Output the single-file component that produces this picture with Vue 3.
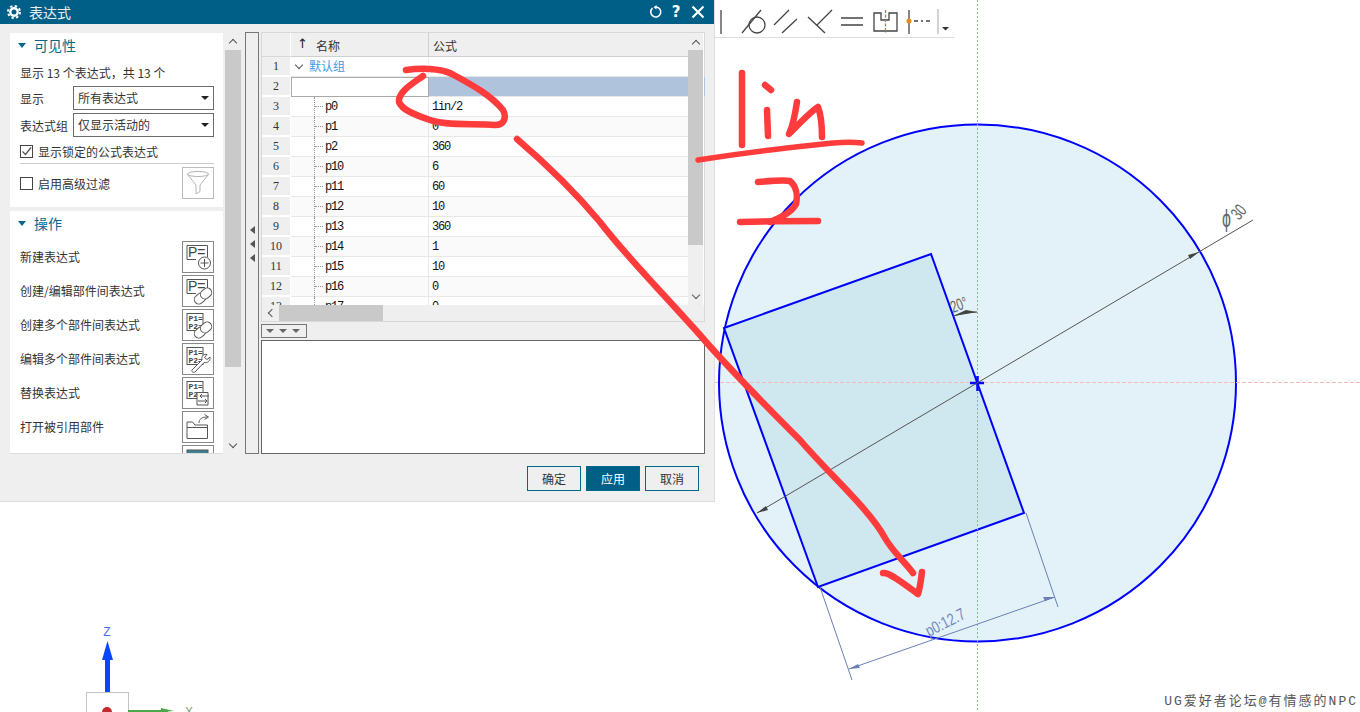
<template>
  <div class="stage">
    <!-- cad viewport -->
    <svg class="canvas" width="1360" height="712" viewBox="0 0 1360 712">
      <circle cx="977.5" cy="383" r="258.5" fill="#e2f2f8" stroke="#0000ff" stroke-width="2" />
      <polygon points="724,328 931,254 1024,513 818,587" fill="#cfe7ef" stroke="#0000ff" stroke-width="2" />
      <line x1="977.5" y1="0" x2="977.5" y2="712" stroke="#8fb58f" stroke-dasharray="2 2" />
      <line x1="690" y1="382.5" x2="1360" y2="382.5" stroke="#f6b8b8" stroke-dasharray="4 2" />
      <path d="M970 383h14M977.5 376v15" stroke="#0000ff" stroke-width="2.500" fill="none" />

      <!-- dia 30 -->
      <line x1="757" y1="513" x2="1253" y2="220" stroke="#555" />
      <polygon points="1199,252 1188,255 1190,259" fill="#444" />
      <polygon points="757,513 768,510 766,506" fill="#444" />
      <text class="dim" transform="translate(1222,227) scale(1,1.500)" font-size="16">ϕ</text>
      <text class="dim" transform="translate(1239,221) rotate(-50) scale(0.800,1.200)" font-size="15">30</text>

      <!-- 20 deg -->
      <path d="M953 316Q965 312 977 312" stroke="#444" fill="none" />
      <polygon points="953,316 966,310 977,312 966,314" fill="#444" />
      <text class="dim" transform="translate(953,313) rotate(-20) scale(0.800,1.200)" font-size="14">20°</text>

      <!-- p0 dim -->
      <path d="M820 587L852 680M1026 513L1058 607M849 669L1055 597" stroke="#6c7fb5" fill="none" />
      <polygon points="849,669 860,668 858,664" fill="#6c7fb5" />
      <polygon points="1055,597 1043,597 1045,601" fill="#6c7fb5" />
      <text class="dim blue" transform="translate(929,637) rotate(-27) scale(0.900,1.200)" font-size="14">p0:12.7</text>

      <!-- triad -->
      <text x="107" y="636" text-anchor="middle" font-size="12" fill="#4a6cf0" font-family="Liberation Sans, sans-serif">Z</text>
      <rect x="105" y="658" width="5" height="35" fill="#0a46ff" />
      <polygon points="107.5,641 102,660 113,660" fill="#0a46ff" />
      <rect x="86.5" y="692.5" width="42" height="24" fill="#fff" stroke="#c4c4c4" />
      <circle cx="107" cy="712" r="5" fill="#c22c2c" />
      <rect x="128" y="710" width="40" height="2" fill="#4aa84a" />
      <polygon points="161,708 174,711 161,712" fill="#4aa84a" />
      <text x="189" y="716" text-anchor="middle" font-size="12" fill="#7aa67a" font-family="Liberation Sans, sans-serif">X</text>
    </svg>

    <!-- sketch constraint toolbar -->
    <div class="toolbar">
      <svg width="238" height="38" viewBox="717 0 238 38" fill="none" stroke="#444" stroke-width="1.300">
        <path d="M721 10v24" />
        <path d="M742 33L761 10" /><circle cx="757" cy="25" r="8" />
        <path d="M774 25L789 10M782 33L797 19" />
        <path d="M808 17L825 33M832 10L817 25" />
        <path d="M841 18h22M841 25h22" />
        <path d="M874 13v18h23V13h-8v7h-8v-7z" />
        <path d="M885.500 10v23" stroke="#d0761f" stroke-dasharray="3 1.500" />
        <path d="M909 10v24" />
        <path d="M914 21h4M921 21h2M926 21h4" />
        <circle cx="909" cy="21" r="2.500" fill="#e58a1c" stroke="none" />
        <path d="M938 9v25" stroke="#bbb" />
        <path d="M942 27h7l-3.500 3.500z" fill="#333" stroke="none" />
      </svg>
    </div>

    <div class="dialog">
      <div class="titlebar">
        <svg class="gear" width="16" height="16" viewBox="0 0 16 16" fill="none" stroke="#fff">
          <circle cx="8" cy="8" r="3.700" stroke-width="2.400" />
          <circle cx="8" cy="8" r="6" stroke-width="2" stroke-dasharray="2.400 2.310" />
        </svg>
        <span class="title">表达式</span>
        <svg class="title-btn" width="14" height="14" viewBox="0 0 14 14" fill="none" stroke="#fff" stroke-width="1.600">
          <path d="M3.500 3.200A5 5 0 1 0 7 2" />
          <path d="M7.500 0L4.500 2.300L7.500 4.600z" fill="#fff" stroke="none" />
        </svg>
        <span class="help">?</span>
        <svg class="close" width="14" height="14" viewBox="0 0 14 14" stroke="#fff" stroke-width="2.200">
          <path d="M1.500 1.500L12.500 12.500M12.500 1.500L1.500 12.500" />
        </svg>
      </div>

      <div class="body">
        <div class="left">
          <div class="panels">
            <section class="panel visible-panel">
              <div class="panel-head"><i class="tri"></i>可见性</div>
              <div class="summary">显示 13 个表达式，共 13 个</div>
              <div class="field">
                <span class="field-label">显示</span>
                <div class="select">所有表达式<i class="select-arrow"></i></div>
              </div>
              <div class="field">
                <span class="field-label">表达式组</span>
                <div class="select">仅显示活动的<i class="select-arrow"></i></div>
              </div>
              <label class="check">
                <span class="box">
                  <svg width="11" height="11" viewBox="0 0 11 11" fill="none" stroke="#555" stroke-width="1.300"><path d="M1.500 5.500L4.500 8.500L10 1.500" /></svg>
                </span>
                显示锁定的公式表达式
              </label>
              <div class="sep"></div>
              <div class="filter-row">
                <label class="check"><span class="box"></span>启用高级过滤</label>
                <div class="filter-btn">
                  <svg width="30" height="30" viewBox="0 0 30 30" fill="none" stroke="#b5b5b5">
                    <ellipse cx="15" cy="6" rx="10.500" ry="2.500" />
                    <path d="M4.500 6.500L13 17V26L17 23.500V17L25.500 6.500" />
                  </svg>
                </div>
              </div>
            </section>

            <section class="panel ops-panel">
              <div class="panel-head"><i class="tri"></i>操作</div>
              <div class="op-list">
                <div v-for="op in ops" :key="op.label" class="op">
                  <span>{{ op.label }}</span>
                  <div class="op-btn">
                    <svg width="30" height="30" viewBox="0 0 30 30" fill="none" stroke="#555" stroke-width="1">
                      <template v-if="op.kind === 'plus' || op.kind === 'link'">
                        <path d="M4 3.500H24.500V15" /><path d="M4 3.500V17.500H13" />
                        <text x="5" y="15" class="ico-big">P=</text>
                      </template>
                      <template v-if="op.kind === 'plus'">
                        <circle cx="21.500" cy="21" r="6" fill="#fff" />
                        <path d="M21.500 17v8M17.500 21h8" />
                      </template>
                      <template v-if="op.kind === 'multi' || op.kind === 'wrench' || op.kind === 'swap'">
                        <rect x="4" y="3.500" width="16" height="17" />
                        <text x="5.500" y="10.500" class="ico-small">P1=</text>
                        <text x="5.500" y="18.500" class="ico-small">P2=</text>
                      </template>
                      <g v-if="op.kind === 'link' || op.kind === 'multi'" transform="rotate(-40 20 20)" fill="#fff">
                        <rect x="10" y="15.500" width="12" height="9" rx="4.500" />
                        <rect x="18" y="15.500" width="12" height="9" rx="4.500" />
                      </g>
                      <path v-if="op.kind === 'wrench'" fill="#fff" d="M9 26L19 16C18 12 21 9.500 24 10.500L21.500 13.500L24 15.500L27 13C27.500 17 24 19.500 21 18.500L12 28C10.500 29 8 27.500 9 26Z" />
                      <template v-if="op.kind === 'swap'">
                        <path d="M14 14.500H25V27H14Z" fill="#fff" />
                        <path d="M26 18H17M19 16L17 18L19 20M15 23H24M22 21L24 23L22 25" />
                      </template>
                      <template v-if="op.kind === 'folder'">
                        <path d="M4 13V26.500H24.500V13H12L9.500 10H4Z" />
                        <path d="M4 15.500H24.500" />
                        <path d="M16 11C16 7 19 5 24 5M21.500 2.500L25.500 5L21.500 7.500" />
                      </template>
                      <template v-if="op.kind === 'view'">
                        <rect x="4" y="4" width="21" height="10" fill="#3f7f92" stroke="#555" />
                      </template>
                    </svg>
                  </div>
                </div>
              </div>
            </section>
          </div>

          <div class="scrollbar">
            <span class="chev up"></span>
            <div class="left-thumb"></div>
            <span class="chev down"></span>
          </div>
        </div>

        <div class="splitter">
          <i v-for="n in 3" :key="n" class="split-arrow"></i>
        </div>

        <div class="right">
          <div class="table">
            <div class="table-top">
              <div class="table-main">
                <div class="row head">
                  <div class="num"></div>
                  <div class="name"><span class="sort">↑</span>名称</div>
                  <div class="formula">公式</div>
                </div>
                <div class="row group">
                  <div class="num">1</div>
                  <div class="name"><i class="expander"></i><span class="group-name">默认组</span></div>
                  <div class="formula"></div>
                </div>
                <div class="row editing">
                  <div class="num">2</div>
                  <div class="name"></div>
                  <div class="formula"></div>
                </div>
                <div v-for="(r, i) in rows" :key="r.name" class="row" :class="{ alt: i % 2 === 1 }">
                  <div class="num">{{ i + 3 }}</div>
                  <div class="name leaf">{{ r.name }}</div>
                  <div class="formula mono">{{ r.value }}</div>
                </div>
              </div>
              <div class="scrollbar table-v">
                <span class="chev up"></span>
                <div class="table-thumb"></div>
                <span class="chev down"></span>
                <i class="row-tick"></i>
              </div>
            </div>
            <div class="hscroll">
              <i class="chev-left"></i>
              <div class="h-thumb"></div>
            </div>
          </div>

          <div class="more-btn"><i v-for="n in 3" :key="n"></i></div>
          <div class="message"></div>
        </div>
      </div>

      <div class="footer">
        <button class="btn">确定</button>
        <button class="btn primary">应用</button>
        <button class="btn">取消</button>
      </div>
    </div>

    <!-- red pen notes drawn over everything -->
    <svg class="ink" width="1360" height="712" viewBox="0 0 1360 712" fill="none" stroke="#ff3b3b" stroke-width="6.500" stroke-linecap="round" stroke-linejoin="round">
      <path d="M406 70C420 68 440 68 452 74C470 84 490 94 503 110C507 118 504 125 495 125C475 123 445 126 430 120C415 115 402 110 399 102C398 92 412 84 423 76" />
      <path d="M517 139C545 163 575 192 600 222C625 255 660 290 700 335C730 370 770 410 800 440C830 475 870 510 885 538C893 552 905 562 913 573" />
      <path d="M883 573C890 572 905 585 918 594C920 588 921 580 922 572" />
      <path d="M742 73V145" />
      <path d="M765 85L771 90" />
      <path d="M767 110L768 136" />
      <path d="M797 102C795 115 792 128 789 134C797 126 810 112 818 107C821 115 822 125 822 137" />
      <path d="M698 160C730 155 773 149 833 143C845 142 855 142 862 143" stroke-width="5.500" />
      <path d="M758 182C770 181 785 180 790 181C796 186 798 195 796 204C792 212 780 218 770 222" />
      <path d="M740 222C770 221 800 221 818 221" />
    </svg>

    <div class="watermark">UG爱好者论坛@有情感的NPC</div>
  </div>
</template>

<script setup>
const ops = [
  { label: '新建表达式', kind: 'plus' },
  { label: '创建/编辑部件间表达式', kind: 'link' },
  { label: '创建多个部件间表达式', kind: 'multi' },
  { label: '编辑多个部件间表达式', kind: 'wrench' },
  { label: '替换表达式', kind: 'swap' },
  { label: '打开被引用部件', kind: 'folder' },
  { label: '', kind: 'view' }
]

const rows = [
  { name: 'p0', value: '1in/2' },
  { name: 'p1', value: '0' },
  { name: 'p2', value: '360' },
  { name: 'p10', value: '6' },
  { name: 'p11', value: '60' },
  { name: 'p12', value: '10' },
  { name: 'p13', value: '360' },
  { name: 'p14', value: '1' },
  { name: 'p15', value: '10' },
  { name: 'p16', value: '0' },
  { name: 'p17', value: '0' }
]
</script>

<style>
html, body {
  margin: 0;
  overflow: hidden;
  background: #fff;
}
</style>

<style scoped>
.stage {
  position: relative;
  width: 1360px;
  height: 712px;
  overflow: hidden;
  background: #fff;
  font-family: "Noto Sans CJK SC", "Liberation Sans", sans-serif;
  font-size: 12px;
  color: #333;
}

.canvas, .ink {
  position: absolute;
  left: 0;
  top: 0;
}

.ink {
  pointer-events: none;
}

.dim {
  font-family: "Liberation Sans", sans-serif;
  fill: #666;
}

.dim.blue {
  fill: #7488b8;
}

.toolbar {
  position: absolute;
  left: 715px;
  top: 0;
  width: 240px;
  height: 38px;
  padding-left: 2px;
  box-sizing: border-box;
  background: #fff;
  border-bottom: 1px solid #ddd;
}

.toolbar svg {
  display: block;
}

.dialog {
  position: absolute;
  left: 0;
  top: 0;
  width: 715px;
  height: 502px;
  box-sizing: border-box;
  background: #efefef;
  border-right: 1px solid #ddd;
  border-bottom: 1px solid #ddd;
}

.titlebar {
  display: flex;
  align-items: center;
  height: 24px;
  padding-left: 6px;
  background: #005f87;
  color: #fff;
}

.gear {
  margin-right: 7px;
}

.title {
  flex: 1;
  font-size: 14px;
  color: #e6eef2;
}

.title-btn {
  margin-right: 7px;
}

.help {
  width: 12px;
  margin-right: 9px;
  font: bold 15px "DejaVu Sans", sans-serif;
  text-align: center;
}

.close {
  margin-right: 9px;
}

.body {
  display: flex;
  height: 430px;
  box-sizing: border-box;
  padding: 8px 0 0 10px;
}

.left {
  display: flex;
  width: 231px;
  height: 422px;
}

.panels {
  width: 213px;
  padding-top: 1px;
  box-sizing: border-box;
  overflow: hidden;
  border-bottom: 1px solid #ddd;
}

.panel {
  background: #fff;
  box-sizing: border-box;
  padding: 0 9px 0 10px;
}

.visible-panel {
  height: 174px;
  margin-bottom: 4px;
}

.ops-panel {
  height: 300px;
}

.panel-head {
  display: flex;
  align-items: center;
  height: 24px;
  font-size: 14px;
  color: #00688b;
}

.tri {
  width: 0;
  height: 0;
  margin: 0 8px 0 -2px;
  border-left: 4.500px solid transparent;
  border-right: 4.500px solid transparent;
  border-top: 5px solid #00688b;
}

.summary {
  height: 18px;
  margin-top: 7px;
  line-height: 17px;
}

.field {
  display: flex;
  align-items: center;
  height: 24px;
  margin-top: 4px;
}

.field + .field {
  margin-top: 3px;
}

.field-label {
  width: 53px;
}

.select {
  position: relative;
  width: 141px;
  height: 24px;
  box-sizing: border-box;
  padding-left: 4px;
  line-height: 22px;
  background: #fff;
  border: 1px solid #6b6b6b;
}

.select-arrow {
  position: absolute;
  right: 4px;
  top: 9px;
  border-left: 4px solid transparent;
  border-right: 4px solid transparent;
  border-top: 4px solid #222;
}

.check {
  display: flex;
  align-items: center;
  gap: 5px;
  height: 20px;
  margin-top: 4px;
}

.box {
  display: flex;
  align-items: center;
  justify-content: center;
  width: 13px;
  height: 13px;
  box-sizing: border-box;
  border: 1px solid #444;
}

.sep {
  height: 1px;
  margin-top: 2px;
  background: #ccc;
}

.filter-row {
  display: flex;
  align-items: center;
  justify-content: space-between;
  margin-top: 3px;
}

.filter-row .check {
  margin-top: 0;
}

.filter-btn {
  width: 32px;
  height: 32px;
  box-sizing: border-box;
  border: 1px solid #bbb;
}

.op-list {
  padding-top: 6px;
}

.op {
  display: flex;
  align-items: center;
  justify-content: space-between;
  height: 32px;
  margin-bottom: 2px;
}

.op span {
  margin-top: -1px;
}

.op-btn {
  width: 32px;
  height: 32px;
  box-sizing: border-box;
  border: 1px solid #888;
}

.op-btn svg {
  display: block;
}

.ico-big {
  font: 14px "Liberation Sans", sans-serif;
  fill: #444;
  stroke: none;
}

.ico-small {
  font: bold 8px "Liberation Mono", monospace;
  fill: #444;
  stroke: none;
}

.scrollbar {
  position: relative;
  display: flex;
  flex-direction: column;
  flex-shrink: 0;
  width: 16px;
  margin-left: 2px;
  background: #efefef;
}

.left-thumb {
  height: 317px;
  margin-top: 18px;
  background: #c9c9c9;
}

.table-thumb {
  height: 195px;
  margin-top: 17px;
  background: #c9c9c9;
}

.row-tick {
  position: absolute;
  right: -2px;
  top: 44px;
  width: 1px;
  height: 19px;
  background: #afc3dc;
}

.chev {
  position: absolute;
  left: 5px;
  width: 5px;
  height: 5px;
  border-left: 1.500px solid #555;
  border-top: 1.500px solid #555;
  transform: rotate(45deg);
}

.chev.up {
  top: 8px;
}

.chev.down {
  bottom: 7px;
  transform: rotate(225deg);
}

.splitter {
  display: flex;
  flex-direction: column;
  align-items: center;
  gap: 6px;
  width: 14px;
  height: 422px;
  margin: 0 2px 0 4px;
  padding-top: 193px;
  box-sizing: border-box;
  border: 1px solid #777;
  background: #efefef;
}

.split-arrow {
  width: 0;
  height: 0;
  border-top: 4px solid transparent;
  border-bottom: 4px solid transparent;
  border-right: 5px solid #555;
}

.right {
  display: flex;
  flex-direction: column;
  width: 444px;
}

.table {
  height: 290px;
  box-sizing: border-box;
  border: 1px solid #d8d8d8;
  background: #fff;
}

.table-top {
  display: flex;
  height: 272px;
}

.table-main {
  width: 426px;
  overflow: hidden;
}

.table-v {
  width: 15px;
  margin-left: 0;
}

.row {
  display: flex;
  height: 20px;
  line-height: 19px;
}

.row.alt .name,
.row.alt .formula {
  background: #fafafa;
}

.num {
  width: 29px;
  flex-shrink: 0;
  box-sizing: border-box;
  text-align: center;
  font: 12px/18px "Liberation Serif", serif;
  background: #efefef;
  border-right: 1px solid #fff;
  border-bottom: 2px solid #fff;
}

.name {
  position: relative;
  width: 138px;
  flex-shrink: 0;
  box-sizing: border-box;
  border-right: 1px solid #e8e8e8;
  border-bottom: 1px solid #e8e8e8;
}

.formula {
  flex: 1;
  box-sizing: border-box;
  padding-left: 3px;
  border-bottom: 1px solid #e8e8e8;
}

.head {
  height: 24px;
  line-height: 26px;
  background: #efefef;
}

.head .num {
  border-bottom: 1px solid #d8d8d8;
}

.head .name, .head .formula {
  border-bottom: 1px solid #d0d0d0;
}

.head .formula {
  padding-left: 4px;
}

.head .name {
  padding-left: 25px;
  border-right: 1px solid #d0d0d0;
}

.sort {
  position: absolute;
  left: 6px;
  top: 3px;
  font: 13px "DejaVu Sans", sans-serif;
  color: #222;
}

.group .name {
  display: flex;
  align-items: center;
  padding-left: 3px;
  border-right-color: #efefef;
}

.expander {
  width: 5px;
  height: 5px;
  margin: -3px 7px 0 2px;
  border-right: 1.500px solid #555;
  border-bottom: 1.500px solid #555;
  transform: rotate(45deg);
}

.group-name {
  margin-top: -2px;
  color: #3f9ae8;
}

.editing .name {
  background: #fff;
  border: 1px solid #aaa;
}

.editing .formula {
  background: #afc3dc;
}

.leaf,
.mono {
  font: 12px/21px "Liberation Mono", monospace;
  letter-spacing: -1.200px;
  color: #111;
}

.leaf {
  padding-left: 34px;
}

.leaf::before {
  content: "";
  position: absolute;
  left: 23px;
  top: 0;
  bottom: -1px;
  border-left: 1px dotted #999;
}

.leaf::after {
  content: "";
  position: absolute;
  left: 24px;
  top: 9px;
  width: 8px;
  border-top: 1px dotted #999;
}

.hscroll {
  position: relative;
  display: flex;
  height: 16px;
  background: #efefef;
}

.chev-left {
  position: absolute;
  left: 7px;
  top: 5px;
  width: 5px;
  height: 5px;
  border-left: 1.500px solid #555;
  border-bottom: 1.500px solid #555;
  transform: rotate(45deg);
}

.h-thumb {
  width: 104px;
  margin-left: 17px;
  background: #c9c9c9;
}

.more-btn {
  display: flex;
  align-items: center;
  gap: 5px;
  width: 46px;
  height: 14px;
  margin-top: 2px;
  padding-left: 4px;
  box-sizing: border-box;
  border: 1px solid #777;
}

.more-btn i {
  border-left: 4px solid transparent;
  border-right: 4px solid transparent;
  border-top: 4px solid #666;
}

.message {
  height: 114px;
  margin-top: 2px;
  box-sizing: border-box;
  background: #fff;
  border: 1px solid #666;
}

.footer {
  display: flex;
  justify-content: flex-end;
  gap: 5px;
  padding: 12px 15px 0 0;
}

.btn {
  width: 54px;
  height: 25px;
  padding: 0;
  font-family: inherit;
  font-size: 12px;
  color: #333;
  background: #efefef;
  border: 1px solid #00688b;
}

.btn.primary {
  color: #fff;
  background: #005f87;
}

.watermark {
  position: absolute;
  right: 2px;
  bottom: 3px;
  font-family: "Liberation Mono", "Noto Sans CJK SC", monospace;
  font-size: 13px;
  letter-spacing: 2px;
  color: #555;
}
</style>
